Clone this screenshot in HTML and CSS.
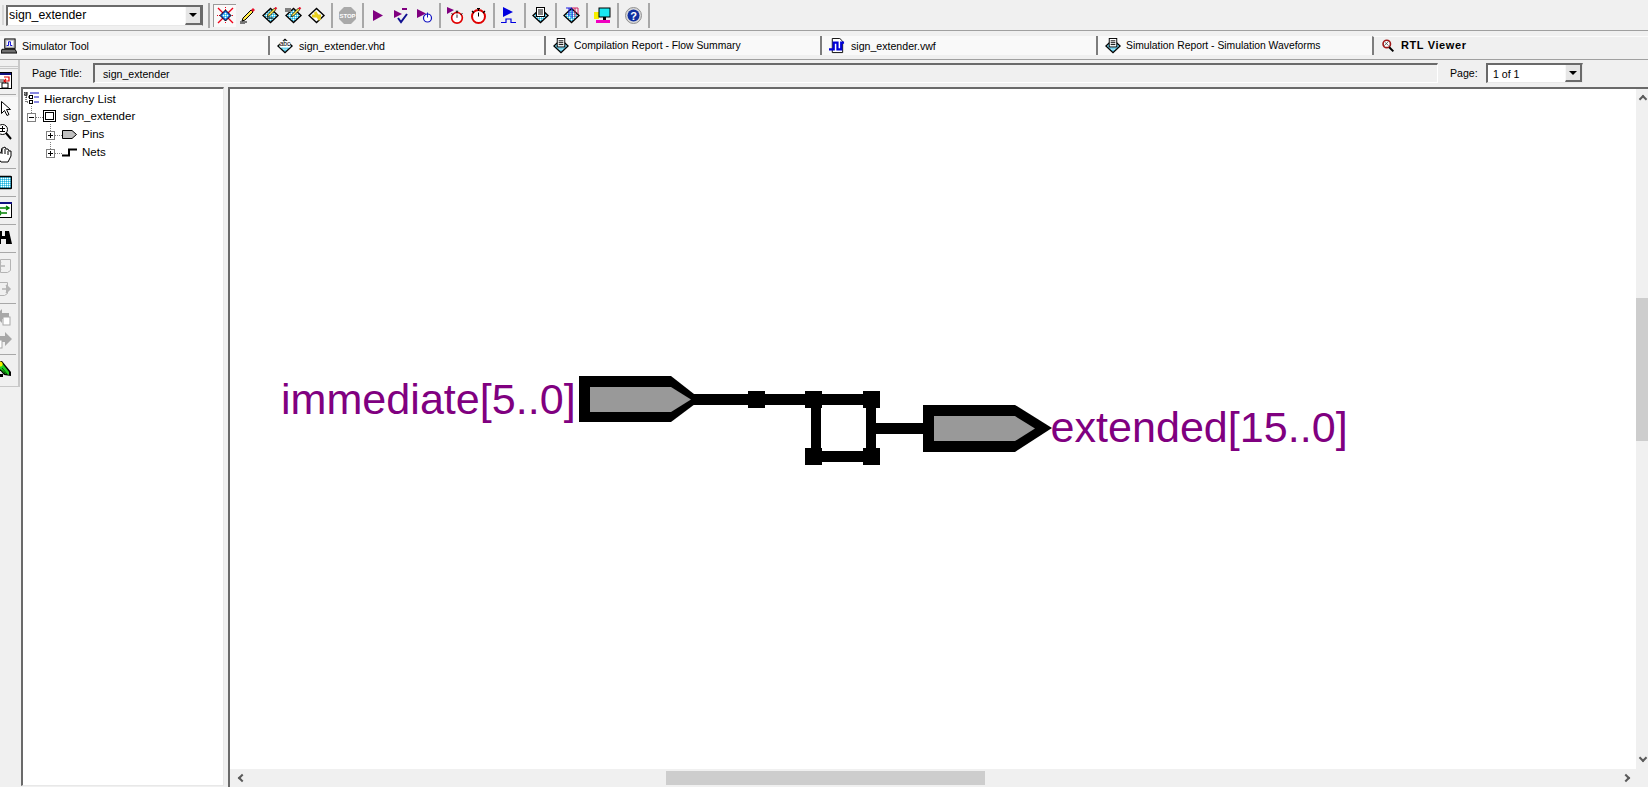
FILE: index.html
```html
<!DOCTYPE html>
<html lang="en">
<head>
    <meta charset="UTF-8">
    <meta name="viewport" content="width=device-width, initial-scale=1.0">
    <title>RTL Viewer - sign_extender</title>
    <link rel="stylesheet" href="styles.css">
</head>
<body>
    <!-- shared icon parts -->
    <svg class="defs" aria-hidden="true">
        <defs>
            <pattern id="dither" width="2" height="2" patternUnits="userSpaceOnUse">
                <rect width="2" height="2" fill="#66d9f2"/>
                <rect width="1" height="1" fill="#fff"/>
                <rect x="1" y="1" width="1" height="1" fill="#2aa8d8"/>
            </pattern>
            <symbol id="diamond" viewBox="0 0 17 17">
                <polygon points="8.5,.5 17,8.5 8.5,16.5 0,8.5" fill="#000"/>
                <polygon points="8.5,2.5 15,8.5 8.5,14.5 2,8.5" fill="url(#dither)"/>
            </symbol>
            <symbol id="report" viewBox="0 0 17 17">
                <use href="#diamond" width="17" height="17"/>
                <rect x="4.5" y=".5" width="8" height="9" fill="#fff" stroke="#000"/>
                <path d="M6 3h5M6 5h5M6 7h5" stroke="#000"/>
            </symbol>
            <symbol id="pencil" viewBox="0 0 17 17">
                <polygon points="4,11 12,3 14,5 6,13 3,14" fill="#ffe94a" stroke="#000"/>
                <polygon points="12,3 14,1 16,3 14,5" fill="#e8102a"/>
            </symbol>
            <symbol id="stopwatch" viewBox="0 0 17 17">
                <circle cx="8.5" cy="9.5" r="6.5" fill="#fff" stroke="#e00000" stroke-width="2"/>
                <path d="M7 1.5h3M8.5 2v2M2 4l2 2M15 4l-2 2" stroke="#000" stroke-width="1.2"/>
                <path d="M8.5 5.5v4" stroke="#000"/>
            </symbol>
        </defs>
    </svg>

    <div class="toolbar">
        <span class="grip"></span>
        <div class="combo">
            <span class="combo-text">sign_extender</span>
            <span class="combo-btn"><i class="caret"></i></span>
        </div>
        <span class="sep"></span>
        <span class="tool selected">
            <svg class="icon" viewBox="0 0 17 17"><path d="M1 1l15 15M16 1L1 16" stroke="#f00018" stroke-width="1.4"/><path d="M8.5 0v4M8.5 13v4M0 8.5h4M13 8.5h4" stroke="#f00018" stroke-dasharray="1 1"/><polygon points="8.5,3 14,8.5 8.5,14 3,8.5" fill="#1c50d8" stroke="#000"/><polygon points="8.5,5 12,8.5 8.5,12 5,8.5" fill="url(#dither)"/></svg>
        </span>
        <span class="tool">
            <svg class="icon" viewBox="0 0 17 17"><use href="#pencil" width="17" height="17"/><path d="M1 15h7M1 17h5" stroke="#000"/></svg>
        </span>
        <span class="tool">
            <svg class="icon" viewBox="0 0 17 17"><use href="#diamond" width="17" height="17"/><use href="#pencil" x="3" y="-1" width="13" height="13"/><path d="M5 11h6" stroke="#000"/></svg>
        </span>
        <span class="tool">
            <svg class="icon" viewBox="0 0 17 17"><use href="#diamond" width="17" height="17"/><rect y="1" width="6" height="4" fill="#808080"/><use href="#pencil" x="4" y="-1" width="13" height="13"/></svg>
        </span>
        <span class="tool">
            <svg class="icon" viewBox="0 0 17 17"><polygon points="8.5,.5 17,8.5 8.5,16.5 0,8.5" fill="#000"/><polygon points="8.5,2.5 15,8.5 8.5,14.5 2,8.5" fill="#fff"/><path d="M4 9h9M7 5l5 8" stroke="#e8d020" stroke-width="3"/></svg>
        </span>
        <span class="sep"></span>
        <span class="tool">
            <svg class="icon" viewBox="0 0 17 17"><polygon points="5,0 12,0 17,5 17,12 12,17 5,17 0,12 0,5" fill="#a9a9a9"/><text class="stop-text" x="8.5" y="11">STOP</text></svg>
        </span>
        <span class="sep"></span>
        <span class="tool">
            <svg class="icon" viewBox="0 0 17 17"><polygon points="3,3 13,8.5 3,14" fill="#800080"/></svg>
        </span>
        <span class="tool">
            <svg class="icon" viewBox="0 0 17 17"><polygon points="1,3 9,7 1,11" fill="#800080"/><path d="M9 2h4M13 1v2" stroke="#800080" stroke-width="2"/><path d="M5 11l3 4 6-8" fill="none" stroke="#101090" stroke-width="2"/></svg>
        </span>
        <span class="tool">
            <svg class="icon" viewBox="0 0 17 17"><polygon points="1,2 10,6.5 1,11" fill="#800080"/><circle cx="11.5" cy="11" r="4" fill="#fff" stroke="#1010c0" stroke-width="1.2"/><path d="M11.5 5.5v5" stroke="#1010c0"/></svg>
        </span>
        <span class="sep"></span>
        <span class="tool">
            <svg class="icon" viewBox="0 0 17 17"><polygon points="0,0 7,3 0,7" fill="#800080"/><use href="#stopwatch" x="3" y="3" width="14" height="14"/></svg>
        </span>
        <span class="tool">
            <svg class="icon" viewBox="0 0 17 17"><use href="#stopwatch" width="17" height="17"/></svg>
        </span>
        <span class="sep"></span>
        <span class="tool">
            <svg class="icon" viewBox="0 0 17 17"><polygon points="2,0 12,5 2,10" fill="#0000e0"/><path d="M0 15.5h5V12h5v3.5h5" fill="none" stroke="#0000e0" stroke-width="1.2"/></svg>
        </span>
        <span class="sep"></span>
        <span class="tool">
            <svg class="icon" viewBox="0 0 17 17"><use href="#report" width="17" height="17"/></svg>
        </span>
        <span class="sep"></span>
        <span class="tool">
            <svg class="icon" viewBox="0 0 17 17"><use href="#diamond" width="17" height="17"/><path d="M3 1h3v8M6 1h3v10" fill="none" stroke="#1818e0"/><path d="M9 1h3v9M12 1h3v6" fill="none" stroke="#d02060"/></svg>
        </span>
        <span class="sep"></span>
        <span class="tool">
            <svg class="icon" viewBox="0 0 17 17"><rect y="5" width="5" height="7" fill="#f6f000"/><rect x="5" y="1" width="11" height="9" fill="#18e8f0" stroke="#000"/><rect x="9" y="10" width="3" height="3" fill="#000"/><rect x="2" y="13" width="14" height="3" fill="#f000c0"/></svg>
        </span>
        <span class="sep"></span>
        <span class="tool">
            <svg class="icon" viewBox="0 0 17 17"><circle cx="8.5" cy="8.5" r="8" fill="#d8d8d8" stroke="#909090"/><circle cx="8.5" cy="8.5" r="6" fill="#1030a0"/><text class="help-text" x="8.5" y="12.5">?</text></svg>
        </span>
        <span class="sep"></span>
    </div>

    <div class="tabs">
        <div class="tab tab-first">
            <svg class="tab-icon" viewBox="0 0 17 17"><rect x="4" y="1" width="11" height="10" fill="#c0c0c0" stroke="#000"/><rect x="6" y="3" width="7" height="6" fill="#fff"/><path d="M6 8h2V4h2v4h2" fill="none" stroke="#0000d0"/><polygon points="1,12 15,12 17,16 0,16" fill="#707070" stroke="#000"/></svg>
            <span>Simulator Tool</span>
        </div>
        <div class="tab">
            <svg class="tab-icon" viewBox="0 0 17 17"><use href="#diamond" width="17" height="17"/><rect x="3" y="3" width="11" height="7" fill="#fff"/><text class="abc-text" x="8.5" y="9">abc</text></svg>
            <span>sign_extender.vhd</span>
        </div>
        <div class="tab tab-report">
            <svg class="tab-icon" viewBox="0 0 17 17"><use href="#report" width="17" height="17"/></svg>
            <span>Compilation Report - Flow Summary</span>
        </div>
        <div class="tab">
            <svg class="tab-icon" viewBox="0 0 17 17"><path d="M3.5 .5h8l3 3v12h-11z" fill="#fff" stroke="#000"/><path d="M0 12h5V5h4v7h4V5h3" fill="none" stroke="#0000d8" stroke-width="2.4"/></svg>
            <span>sign_extender.vwf</span>
        </div>
        <div class="tab tab-report">
            <svg class="tab-icon" viewBox="0 0 17 17"><use href="#report" width="17" height="17"/></svg>
            <span>Simulation Report - Simulation Waveforms</span>
        </div>
        <div class="tab tab-active">
            <svg class="tab-icon" viewBox="0 0 17 17"><circle cx="7" cy="6" r="4.5" fill="#fff" stroke="#a01818" stroke-width="2"/><path d="M5 4l4 4M9 3L4 8" stroke="#404040"/><path d="M10 10l5 5" stroke="#000" stroke-width="2.4"/></svg>
            <span>RTL Viewer</span>
        </div>
    </div>

    <div class="workspace">
        <div class="sidetools">
            <div class="side-grip"></div>
            <span class="side-tool">
                <svg class="icon" viewBox="0 0 17 17"><rect x=".5" y=".5" width="16" height="16" fill="#fff" stroke="#000"/><rect x="1" y="1" width="15" height="2" fill="#101080"/><rect y="7" width="9" height="4" fill="#a0a0a0"/><path d="M9 5h5v4h-5M11 7L9 9l2 2" fill="none" stroke="#e00000" stroke-width="1.2"/><rect x="7" y="11" width="6" height="5" fill="#fff" stroke="#000"/></svg>
            </span>
            <span class="side-sep"></span>
            <span class="side-tool on">
                <svg class="icon" viewBox="0 0 17 17"><path d="M6.5 1.5v12l3-3 2.5 5 2-1-2.5-5h4z" fill="#fff" stroke="#000"/></svg>
            </span>
            <span class="side-tool">
                <svg class="icon" viewBox="0 0 17 17"><circle cx="7.5" cy="6.5" r="5" fill="#fff" stroke="#000"/><path d="M5 5.5h5M7.5 3v5M5 8.5h5" stroke="#000"/><path d="M11 10l5 6" stroke="#000" stroke-width="2"/></svg>
            </span>
            <span class="side-tool">
                <svg class="icon" viewBox="0 0 17 17"><path d="M3 6l-1 5 4 5h7l3-6V5l-2 0-1-2-2 0-1-2-2 1-1 0-1 5z" fill="#fff" stroke="#000"/><path d="M7 3v5M10 3v5M13 5v4" stroke="#000"/></svg>
            </span>
            <span class="side-sep"></span>
            <span class="side-tool">
                <svg class="icon" viewBox="0 0 17 17"><rect x=".5" y="2.5" width="16" height="12" rx="1" fill="url(#dither)" stroke="#000" stroke-width="1.4"/></svg>
            </span>
            <span class="side-sep"></span>
            <span class="side-tool">
                <svg class="icon" viewBox="0 0 17 17"><rect x=".5" y=".5" width="16" height="15" fill="#fff" stroke="#000"/><rect y="0" width="17" height="2" fill="#101080"/><path d="M5 6h8M11 4l3 2-3 2M12 11H4M6 9l-3 2 3 2" fill="none" stroke="#008000" stroke-width="1.4"/></svg>
            </span>
            <span class="side-sep"></span>
            <span class="side-tool">
                <svg class="icon" viewBox="0 0 17 17"><path d="M3 1h4v5h3V1h4l3 13h-6V9H6v5H0z" fill="#000"/><path d="M8 3v3" stroke="#fff"/></svg>
            </span>
            <span class="side-sep"></span>
            <span class="side-tool">
                <svg class="icon" viewBox="0 0 17 17"><path d="M5.5 1.5h10v11l-3 2h-7z" fill="none" stroke="#b4b4b4"/><path d="M10 8H3M6 4L2 8l4 4" fill="#b4b4b4" stroke="#b4b4b4" stroke-width="1.5"/></svg>
            </span>
            <span class="side-tool">
                <svg class="icon" viewBox="0 0 17 17"><path d="M1.5 1.5h11v11l-3 2h-8z" fill="none" stroke="#b4b4b4"/><path d="M7 8h7M11 4l4 4-4 4" fill="#b4b4b4" stroke="#b4b4b4" stroke-width="1.5"/></svg>
            </span>
            <span class="side-sep"></span>
            <span class="side-tool">
                <svg class="icon" viewBox="0 0 17 17"><polygon points="7,0 0,7 7,14 7,10 14,10 14,4 7,4" fill="#a8a8a8"/><rect x="8" y="8" width="7" height="8" fill="#fff" stroke="#a8a8a8"/></svg>
            </span>
            <span class="side-tool">
                <svg class="icon" viewBox="0 0 17 17"><polygon points="10,0 17,7 10,14 10,10 3,10 3,4 10,4" fill="#a8a8a8"/><rect x="0" y="8" width="7" height="8" fill="#fff" stroke="#a8a8a8"/></svg>
            </span>
            <span class="side-sep"></span>
            <span class="side-tool">
                <svg class="icon" viewBox="0 0 17 17"><polygon points="1,2 7,1 16,12 16,16 9,15 3,8" fill="#000"/><polygon points="3,3 7,3 14,12 14,15 9,13 4,8" fill="#22d022"/><circle cx="5" cy="4" r="2.6" fill="#f6f000"/><path d="M7 8l5 6M6 10l4 3" stroke="#005000"/><rect x="0" y="14" width="3" height="3" fill="#000"/><rect x="5" y="14" width="3" height="3" fill="#000"/></svg>
            </span>
        </div>

        <div class="main">
            <div class="titlebar">
                <span class="field-label">Page Title:</span>
                <span class="title-field">sign_extender</span>
                <span class="page-label">Page:</span>
                <div class="page-select">
                    <span class="page-text">1 of 1</span>
                    <span class="combo-btn"><i class="caret"></i></span>
                </div>
            </div>

            <div class="panes">
                <div class="hierarchy">
                    <div class="tree-row tree-root">
                        <svg class="tree-icon" viewBox="0 0 15 12"><path d="M2 1v9h4M2 5h4" fill="none" stroke="#000" stroke-dasharray="1 1"/><rect width="3" height="3" fill="none" stroke="#000"/><rect x="5.5" y="3.5" width="3" height="3" fill="none" stroke="#000"/><rect x="5.5" y="8.5" width="3" height="3" fill="none" stroke="#000"/><path d="M6 1h9M10 5h5M10 10h5" stroke="#1010c0"/></svg>
                        <span>Hierarchy List</span>
                    </div>
                    <div class="tree-row tree-level1">
                        <span class="expander minus"></span>
                        <span class="dots"></span>
                        <svg class="entity-icon" viewBox="0 0 13 12"><rect x=".5" y=".5" width="12" height="11" fill="#fff" stroke="#000"/><rect x="2.5" y="2.5" width="8" height="7" fill="#fff" stroke="#000"/></svg>
                        <span>sign_extender</span>
                    </div>
                    <div class="tree-row tree-level2">
                        <span class="expander plus"></span>
                        <span class="dots"></span>
                        <svg class="node-icon" viewBox="0 0 15 9"><polygon points=".5,.5 10,.5 14.5,4.5 10,8.5 .5,8.5" fill="#c0c0c0" stroke="#000"/></svg>
                        <span>Pins</span>
                    </div>
                    <div class="tree-row tree-level2">
                        <span class="expander plus"></span>
                        <span class="dots"></span>
                        <svg class="node-icon" viewBox="0 0 15 9"><path d="M0 7.5h7V1.5h8" fill="none" stroke="#000" stroke-width="2"/></svg>
                        <span>Nets</span>
                    </div>
                </div>

                <div class="viewer">
                    <div class="canvas">
                        <!-- schematic, drawn in page coordinates -->
                        <svg class="schematic" viewBox="230 89 1406 680">
                            <g class="wires">
                                <rect x="690" y="394" width="180" height="11"/>
                                <rect x="811" y="400" width="10" height="55"/>
                                <rect x="866" y="400" width="10" height="55"/>
                                <rect x="811" y="451" width="65" height="11"/>
                                <rect x="876" y="423" width="50" height="11"/>
                                <rect x="748" y="391" width="17" height="17"/>
                                <rect x="805" y="391" width="17" height="17"/>
                                <rect x="863" y="391" width="17" height="17"/>
                                <rect x="805" y="448" width="17" height="17"/>
                                <rect x="863" y="448" width="17" height="17"/>
                            </g>
                            <polygon class="pin-outer" points="579,376 671,376 701,399.5 671,422 579,422"/>
                            <polygon class="pin-inner" points="590,387 671,387 691,399.5 671,412 590,412"/>
                            <polygon class="pin-outer" points="923,405 1015,405 1052,428 1015,452 923,452"/>
                            <polygon class="pin-inner" points="934,416 1015,416 1035,428.5 1015,441 934,441"/>
                            <text class="pin-name" x="281" y="414">immediate[5..0]</text>
                            <text class="pin-name" x="1050.5" y="442">extended[15..0]</text>
                        </svg>
                    </div>
                    <div class="vscroll">
                        <i class="chevron up"></i>
                        <div class="vthumb"></div>
                        <i class="chevron down"></i>
                    </div>
                    <div class="hscroll">
                        <i class="chevron left"></i>
                        <div class="hthumb"></div>
                        <i class="chevron right"></i>
                    </div>
                    <div class="corner"></div>
                </div>
            </div>
        </div>
    </div>
</body>
</html>
```

FILE: styles.css
```css
* {
    box-sizing: border-box;
    margin: 0;
    padding: 0;
}

html,
body {
    width: 1648px;
    height: 787px;
    overflow: hidden;
}

body {
    display: flex;
    flex-direction: column;
    background: #f0f0f0;
    font-family: "Liberation Sans", Arial, sans-serif;
    font-size: 10.6px;
    color: #000;
}

.defs {
    position: absolute;
    width: 0;
    height: 0;
}

.icon {
    width: 17px;
    height: 17px;
    flex-shrink: 0;
    display: block;
}

/* top toolbar */
.toolbar {
    height: 31px;
    flex-shrink: 0;
    display: flex;
    align-items: center;
    padding: 0 0 0 2px;
    border-bottom: 1px solid #a0a0a0;
}

.grip {
    width: 2px;
    height: 20px;
    margin-right: 2px;
    background: #d8d8d8;
}

.combo {
    width: 197px;
    height: 21px;
    margin-right: 2px;
    display: flex;
    background: #fff;
    border-top: 2px solid #6a6a6a;
    border-left: 2px solid #6a6a6a;
    border-right: 1px solid #6a6a6a;
    border-bottom: 1px solid #e8e8e8;
}

.combo-text {
    flex: 1;
    padding-left: 1px;
    font-size: 12.3px;
    line-height: 17px;
}

.combo-btn {
    width: 17px;
    display: flex;
    align-items: center;
    justify-content: center;
    background: #e6e6e6;
    border-right: 2px solid #6a6a6a;
    border-bottom: 2px solid #6a6a6a;
    border-left: 1px solid #f8f8f8;
}

.caret {
    width: 0;
    height: 0;
    border-left: 4px solid transparent;
    border-right: 4px solid transparent;
    border-top: 4px solid #000;
}

.sep {
    width: 8px;
    height: 25px;
    flex-shrink: 0;
    display: flex;
    justify-content: center;
}

.sep::before {
    content: "";
    width: 2px;
    background: #a8a8a8;
}

.tool {
    width: 23px;
    height: 23px;
    flex-shrink: 0;
    display: flex;
    align-items: center;
    justify-content: center;
}

.tool.selected {
    background: #f9f9f9;
    border-top: 1px solid #9a9a9a;
    border-left: 1px solid #9a9a9a;
}

.stop-text {
    font-family: "Liberation Sans", Arial, sans-serif;
    font-size: 6px;
    font-weight: 700;
    fill: #fff;
    text-anchor: middle;
}

.help-text {
    font-family: "Liberation Sans", Arial, sans-serif;
    font-size: 11px;
    font-weight: 700;
    fill: #fff;
    text-anchor: middle;
}

.abc-text {
    font-family: "Liberation Sans", Arial, sans-serif;
    font-size: 7px;
    fill: #000;
    text-anchor: middle;
}

/* document tabs */
.tabs {
    height: 29px;
    flex-shrink: 0;
    display: flex;
    padding: 5px 0 3px;
    border-bottom: 1px solid #a0a0a0;
    box-shadow: inset 0 -1px 0 #f0f0f0;
}

.tab {
    width: 276px;
    height: 19px;
    flex-shrink: 0;
    display: flex;
    align-items: center;
    gap: 6px;
    padding-left: 7px;
    background: #f9f9f9;
    border-left: 2px solid #7d7d7d;
}

.tab-first {
    width: 268px;
    padding-left: 1px;
    gap: 5px;
    border-left: 0;
}

.tab-report {
    gap: 5px;
    font-size: 10.35px;
}

.tab-active {
    flex: 1;
    align-items: flex-start;
    background: #f0f0f0;
    border-top: 1px solid #fbfbfb;
    font-weight: 700;
    font-size: 11px;
    letter-spacing: .6px;
    padding-top: 2px;
}

.tab-icon {
    width: 16px;
    height: 16px;
    flex-shrink: 0;
}

.tab-active .tab-icon {
    width: 14px;
    height: 14px;
}

/* left tool strip + main area */
.workspace {
    flex: 1;
    min-height: 0;
    display: flex;
}

.sidetools {
    width: 20px;
    height: 327px;
    flex-shrink: 0;
    display: flex;
    flex-direction: column;
    border-right: 2px solid #c8c8c8;
    border-bottom: 1px solid #c8c8c8;
}

.side-grip {
    height: 8.5px;
    flex-shrink: 0;
    border-top: 3px solid #f0f0f0;
    border-bottom: 3px double #c8c8c8;
}

.side-tool {
    height: 23px;
    flex-shrink: 0;
    display: flex;
    align-items: center;
    justify-content: flex-end;
    padding-right: 6px;
    overflow: hidden;
}

.side-tool.on {
    background: #f8f8f8;
}

.side-sep {
    height: 5px;
    flex-shrink: 0;
    display: flex;
    align-items: center;
}

.side-sep::before {
    content: "";
    width: 16px;
    height: 1px;
    background: #a8a8a8;
}

.main {
    flex: 1;
    min-width: 0;
    display: flex;
    flex-direction: column;
}

/* page title row */
.titlebar {
    height: 27px;
    flex-shrink: 0;
    display: flex;
    align-items: flex-start;
    padding: 3px 0 0 12px;
}

.field-label {
    width: 61px;
    flex-shrink: 0;
    line-height: 20px;
}

.title-field {
    flex: 1;
    height: 20px;
    padding-left: 8px;
    line-height: 18px;
    background: #f0f0f0;
    border-top: 2px solid #6a6a6a;
    border-left: 2px solid #6a6a6a;
    border-right: 1px solid #fff;
    border-bottom: 1px solid #fff;
}

.page-label {
    width: 48px;
    flex-shrink: 0;
    padding-left: 12px;
    line-height: 20px;
}

.page-select {
    width: 97px;
    height: 20px;
    margin-right: 65px;
    flex-shrink: 0;
    display: flex;
    background: #fff;
    border-top: 2px solid #6a6a6a;
    border-left: 2px solid #6a6a6a;
    border-right: 1px solid #e8e8e8;
    border-bottom: 1px solid #e8e8e8;
}

.page-text {
    flex: 1;
    padding-left: 5px;
    line-height: 18px;
}

/* hierarchy and schematic panes */
.panes {
    flex: 1;
    min-height: 0;
    display: flex;
    padding-left: 1px;
}

.hierarchy {
    width: 203px;
    height: 699px;
    flex-shrink: 0;
    background: #fff;
    border-top: 2px solid #6a6a6a;
    border-left: 2px solid #6a6a6a;
    border-right: 1px solid #e8e8e8;
    border-bottom: 1px solid #e8e8e8;
    font-size: 11.5px;
}

.tree-row {
    height: 18px;
    display: flex;
    align-items: center;
}

.tree-root {
    gap: 5px;
    padding-left: 1px;
    font-size: 11.75px;
}

.tree-icon {
    width: 15px;
    height: 12px;
    flex-shrink: 0;
}

.tree-level1 {
    padding-left: 4px;
}

.tree-level2 {
    padding-left: 23px;
}

.entity-icon {
    width: 13px;
    height: 12px;
    flex-shrink: 0;
    margin-right: 7px;
}

.node-icon {
    width: 15px;
    height: 9px;
    flex-shrink: 0;
    margin-right: 5px;
}

.expander {
    position: relative;
    width: 9px;
    height: 9px;
    flex-shrink: 0;
    margin-top: 2px;
    border: 1px solid #808080;
}

.expander::before {
    content: "";
    position: absolute;
    left: 1px;
    right: 1px;
    top: 3px;
    height: 1px;
    background: #000;
}

.expander.plus::after {
    content: "";
    position: absolute;
    top: 1px;
    bottom: 1px;
    left: 3px;
    width: 1px;
    background: #000;
}

/* dotted stub above each expander */
.tree-row .dots {
    position: relative;
    width: 7px;
    flex-shrink: 0;
    margin-top: 2px;
    border-top: 1px dotted #808080;
}

.tree-row .dots::before {
    content: "";
    position: absolute;
    left: -5px;
    top: -12px;
    height: 7px;
    border-left: 1px dotted #808080;
}

.viewer {
    flex: 1;
    min-width: 0;
    margin-left: 4px;
    display: grid;
    grid-template-columns: 1fr 12px;
    grid-template-rows: 1fr 18px;
    border-top: 2px solid #6a6a6a;
    border-left: 2px solid #6a6a6a;
}

.canvas {
    background: #fff;
    min-height: 0;
}

.schematic {
    display: block;
    width: 1406px;
    height: 680px;
}

.wires rect {
    fill: #000;
}

.wires {
    shape-rendering: crispEdges;
}

.pin-outer {
    fill: #000;
}

.pin-inner {
    fill: #999;
}

.pin-name {
    font-family: "Liberation Sans", Arial, sans-serif;
    font-size: 43.1px;
    fill: #800080;
}

/* scrollbars */
.vscroll {
    position: relative;
    background: #f0f0f0;
}

.vthumb {
    position: absolute;
    left: 0;
    right: 0;
    top: 209px;
    height: 143px;
    background: #cdcdcd;
}

.hscroll {
    position: relative;
    background: #f0f0f0;
}

.hthumb {
    position: absolute;
    top: 2px;
    bottom: 2px;
    left: 436px;
    width: 319px;
    background: #cdcdcd;
}

.corner {
    background: #f0f0f0;
}

.chevron {
    position: absolute;
    width: 6px;
    height: 6px;
    border-top: 2px solid #5a5a5a;
    border-left: 2px solid #5a5a5a;
}

.chevron.up {
    left: 4px;
    top: 7px;
    transform: rotate(45deg);
}

.chevron.down {
    left: 4px;
    bottom: 8px;
    transform: rotate(225deg);
}

.chevron.left {
    left: 9px;
    top: 6px;
    transform: rotate(-45deg);
}

.chevron.right {
    right: 7px;
    top: 6px;
    transform: rotate(135deg);
}
```
